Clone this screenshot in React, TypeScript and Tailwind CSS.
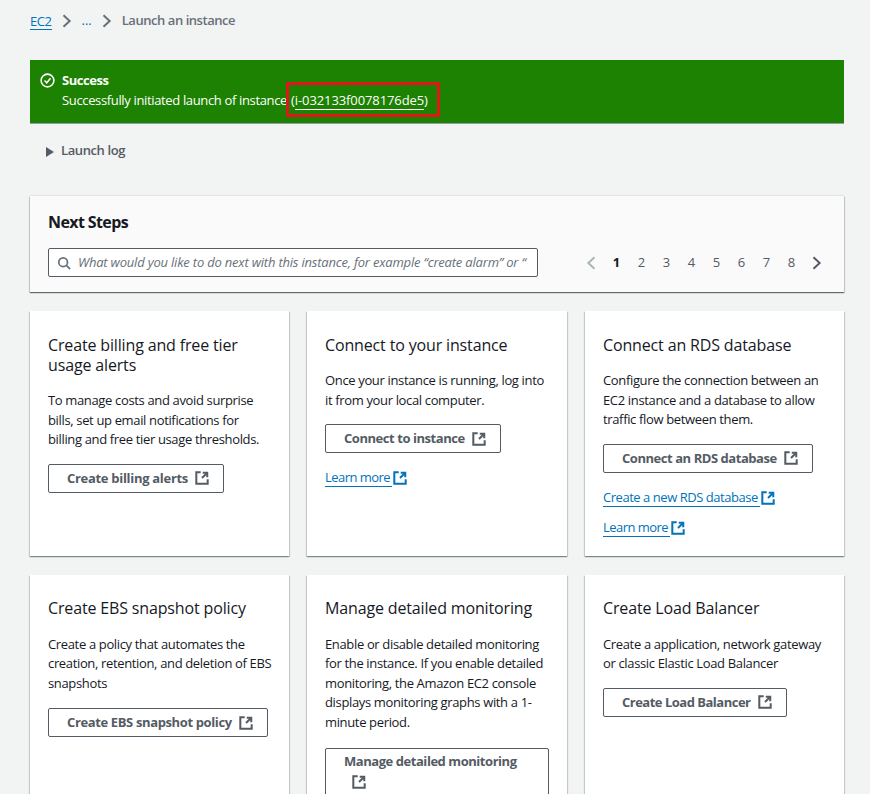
import React from "react";

function Ext({ className = "" }: { className?: string }) {
  return (
    <svg viewBox="0 0 16 16" fill="none" stroke="currentColor" strokeWidth="2.3" className={`w-[14px] h-[14px] inline-block shrink-0 ${className}`}>
      <path d="M10 2H14V6" strokeLinecap="square" />
      <path d="M6.5 1.5H1.5V14.5H14.5V9.5" />
      <path d="M14 2L8 8" />
    </svg>
  );
}

function Btn({ label, wrap, track = "tracking-[-0.45px]", top = "mt-[14px]" }: { label: string; wrap?: boolean; track?: string; top?: string }) {
  return (
    <div className={`${top} border border-[#545b64] rounded-[2px] bg-white text-[#545b64] font-bold pl-[18px] text-[13px] leading-[20px] ${track} ${wrap ? "w-[224px] pt-[2px] pb-[4px]" : "w-fit pr-[14px] h-[29px] pb-[1px] flex items-center"}`}>
      <span>{label}</span>
      {wrap ? <div className="mt-[1px] pl-[8px] h-[20px] flex items-center"><Ext /></div> : <Ext className="ml-[7px] mt-[1px]" />}
    </div>
  );
}

function LinkExt({ label, next, track = "tracking-[-0.55px]" }: { label: string; next?: boolean; track?: string }) {
  return (
    <div className={`${next ? "mt-[12px]" : "mt-[16px]"} text-[13px] text-[#0073bb] flex items-center w-fit ${track}`}>
      <span className="border-b border-[#0073bb] pr-[2px] leading-[17px]">{label}</span>
      <Ext className="ml-[1px]" />
    </div>
  );
}

function Card({ title, body, low, children }: { title: string; body: string[]; low?: boolean; children: React.ReactNode }) {
  return (
    <div className={`bg-white shadow-[0_1px_1px_0_rgba(0,28,36,0.3),1px_1px_1px_0_rgba(0,28,36,0.15),-1px_1px_1px_0_rgba(0,28,36,0.15)] px-[18px] pb-[10px] min-h-[245px] ${low ? "pt-[23px]" : "pt-[24px]"}`}>
      <h3 className="text-[16px] leading-[20px] text-[#16191f] font-normal tracking-[-0.15px]">{title}</h3>
      <div className={`${low ? "mt-[16.5px]" : "mt-[16px]"} text-[13px] leading-[19.5px] text-[#16191f]`}>
        {body.map((l) => <div key={l} className="whitespace-nowrap">{l}</div>)}
      </div>
      {children}
    </div>
  );
}

function Chev({ className = "" }: { className?: string }) {
  return (
    <svg viewBox="0 0 16 16" className={`w-[14px] h-[14px] mx-[8px] ${className}`} fill="none" stroke="#687078" strokeWidth="2.3"><path d="M4 1.5L11 8L4 14.5" /></svg>
  );
}

export default function App() {
  return (
    <div className="relative w-[870px] h-[794px] overflow-hidden bg-[#f2f3f3] font-['Open_Sans','Noto_Sans',sans-serif] pl-[30px] pr-[26px] pt-[11px] tracking-[-0.35px]">
      <nav className="flex items-center h-[20px] text-[13px] text-[#687078] font-semibold tracking-[-0.45px]">
        <span className="text-[#0073bb] font-normal border-b border-[#0073bb] leading-[16px]">EC2</span>
        <Chev />
        <span className="text-[#0073bb] font-normal tracking-normal">...</span>
        <Chev />
        <span>Launch an instance</span>
      </nav>

      <div className="mt-[29px] h-[63px] bg-[#1d8102] flex pl-[10px] pt-[10px] text-white text-[13px] leading-[20px] shadow-[0_1px_0_0_rgba(0,28,36,0.4)]">
        <svg viewBox="0 0 16 16" className="w-[15px] h-[15px] mt-[3px]" fill="none" stroke="white" strokeWidth="1.7"><circle cx="8" cy="8" r="6.8" /><path d="M4.8 8L7.2 10.4L11.2 5.6" /></svg>
        <div className="ml-[7px]">
          <div className="font-bold tracking-[-0.45px]">Success</div>
          <div>Successfully initiated launch of instance <span className="ml-[1px] tracking-[-0.1px]">(<span className="border-b border-white">i-032133f0078176de5</span>)</span></div>
        </div>
      </div>
      <div className="absolute left-[286px] top-[82px] w-[154px] h-[35px] border-[3px] border-[#e0161b]" />

      <div className="mt-[18px] h-[20px] flex items-center text-[13px] font-semibold text-[#545b64] pl-[16px] tracking-[-0.4px]">
        <span className="w-0 h-0 border-y-[5px] border-y-transparent border-l-[8px] border-l-[#545b64] mr-[7px] mt-[2px]" />
        Launch log
      </div>

      <section className="mt-[35px] h-[96px] bg-[#fafafa] shadow-[0_1px_1px_0_rgba(0,28,36,0.5),1px_1px_1px_0_rgba(0,28,36,0.12),-1px_1px_1px_0_rgba(0,28,36,0.12),0_-1px_1px_0_rgba(0,28,36,0.06)] px-[18px] pt-[15px]">
        <h2 className="text-[16px] leading-[22px] font-bold text-[#16191f] tracking-[-0.6px]">Next Steps</h2>
        <div className="mt-[15px] flex items-center justify-between">
          <div className="w-[490px] h-[29px] border border-[#545b64] rounded-[2px] bg-white flex items-center pl-[8px]">
            <svg viewBox="0 0 16 16" className="w-[14px] h-[14px] shrink-0" fill="none" stroke="#687078" strokeWidth="2"><circle cx="7" cy="7" r="5" /><path d="M11 11L15 15" /></svg>
            <span className="ml-[7px] text-[13px] italic text-[#687078] whitespace-nowrap tracking-[-0.2px]">What would you like to do next with this instance, for example “create alarm” or “</span>
          </div>
          <div className="flex items-center text-[13px] text-[#545b64] mr-[2px] tracking-normal">
            <svg viewBox="0 0 16 16" className="w-[14px] h-[14px] mr-[6px]" fill="none" stroke="#aab7b8" strokeWidth="2.3"><path d="M12 1.5L5 8L12 14.5" /></svg>
            <div className="flex">
              <span className="w-[25px] text-center font-bold text-[#16191f]">1</span>
              {[2, 3, 4, 5, 6, 7, 8].map((n) => <span key={n} className="w-[25px] text-center">{n}</span>)}
            </div>
            <svg viewBox="0 0 16 16" className="w-[14px] h-[14px] ml-[6px]" fill="none" stroke="#545b64" strokeWidth="2.3"><path d="M4 1.5L11 8L4 14.5" /></svg>
          </div>
        </div>
      </section>

      <div className="mt-[19px] grid grid-cols-[259px_260px_259px] gap-x-[18px] gap-y-[19px]">
        <Card title="Create billing and free tier usage alerts" body={["To manage costs and avoid surprise", "bills, set up email notifications for", "billing and free tier usage thresholds."]}>
          <Btn label="Create billing alerts" track="tracking-[-0.3px]" />
        </Card>
        <Card title="Connect to your instance" body={["Once your instance is running, log into", "it from your local computer."]}>
          <Btn label="Connect to instance" />
          <LinkExt label="Learn more" />
        </Card>
        <Card title="Connect an RDS database" body={["Configure the connection between an", "EC2 instance and a database to allow", "traffic flow between them."]}>
          <Btn label="Connect an RDS database" />
          <LinkExt label="Create a new RDS database" track="tracking-[-0.46px]" />
          <LinkExt label="Learn more" next />
        </Card>
        <Card low title="Create EBS snapshot policy" body={["Create a policy that automates the", "creation, retention, and deletion of EBS", "snapshots"]}>
          <Btn label="Create EBS snapshot policy" track="tracking-[-0.37px]" top="mt-[15px]" />
        </Card>
        <Card low title="Manage detailed monitoring" body={["Enable or disable detailed monitoring", "for the instance. If you enable detailed", "monitoring, the Amazon EC2 console", "displays monitoring graphs with a 1-", "minute period."]}>
          <Btn label="Manage detailed monitoring" wrap top="mt-[16px]" />
        </Card>
        <Card low title="Create Load Balancer" body={["Create a application, network gateway", "or classic Elastic Load Balancer"]}>
          <Btn label="Create Load Balancer" track="tracking-[-0.5px]" />
        </Card>
      </div>
    </div>
  );
}
